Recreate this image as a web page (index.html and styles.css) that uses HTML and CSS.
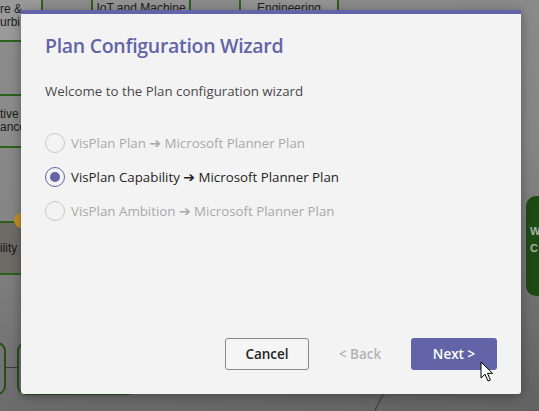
FILE: index.html
```html
<!DOCTYPE html>
<html lang="en">
<head>
<meta charset="utf-8">
<title>Plan Configuration Wizard</title>
<link rel="stylesheet" href="styles.css">
</head>
<body>
<div class="canvas">
  <div class="node node-top n1"><span>re &amp;<br>urbi</span></div>
  <div class="node node-top n2"><span>IoT and Machine</span></div>
  <div class="node node-top n3"><span>Engineering</span></div>
  <div class="node node-left n4"><span>tive<br>ance</span></div>
  <div class="node node-left n5"><span>ility</span></div>
  <div class="badge"></div>
  <div class="pill p1"></div>
  <div class="pill p2"></div>
  <div class="link l1"></div>
  <div class="link l2"></div>
  <div class="green-node"><span>W<br>C</span></div>
</div>

<div class="overlay">
  <div class="dialog" role="dialog" aria-labelledby="dlg-title">
    <h1 class="title" id="dlg-title">Plan Configuration Wizard</h1>
    <p class="intro">Welcome to the Plan configuration wizard</p>
    <div class="options">
      <div class="option is-disabled">
        <span class="radio"></span>
        <span class="label">VisPlan Plan <span class="arrow">➔</span> Microsoft Planner Plan</span>
      </div>
      <div class="option is-checked">
        <span class="radio"></span>
        <span class="label">VisPlan Capability <span class="arrow">➔</span> Microsoft Planner Plan</span>
      </div>
      <div class="option is-disabled">
        <span class="radio"></span>
        <span class="label">VisPlan Ambition <span class="arrow">➔</span> Microsoft Planner Plan</span>
      </div>
    </div>
    <div class="footer">
      <button class="btn btn-default">Cancel</button>
      <button class="btn btn-ghost" disabled>&lt; Back</button>
      <button class="btn btn-primary">Next &gt;</button>
    </div>
  </div>
</div>

<svg class="cursor" width="14" height="22" viewBox="0 0 14 22" aria-hidden="true">
  <path d="M1 1 L1 17 L5 13.2 L8 20 L10.4 19 L7.5 12.3 L12.5 12.3 Z" fill="#fff" stroke="#000" stroke-width="1" stroke-linejoin="miter"/>
</svg>
</body>
</html>
```
FILE: styles.css
```css
html, body {
  margin: 0;
  padding: 0;
}

body {
  width: 539px;
  height: 411px;
  overflow: hidden;
  position: relative;
  font-family: "Open Sans", "Noto Sans", "DejaVu Sans", sans-serif;
  background: linear-gradient(172deg, #8d8d8d 0%, #858585 45%, #6b6b6b 85%, #626262 100%);
}

/* ---------- background diagram (free canvas) ---------- */
.canvas {
  position: absolute;
  inset: 0;
}

.node {
  position: absolute;
  box-sizing: border-box;
  background: #939393;
  color: #1c1c1c;
  font-family: "Liberation Sans", Arial, sans-serif;
  font-size: 12px;
  line-height: 13px;
  display: flex;
  justify-content: center;
}

.node-top {
  top: -20px;
  height: 62px;
  border: 2px solid #2b6219;
  align-items: flex-start;
  padding-top: 20px;
}

.n1 {
  left: -60px;
  width: 103px;
  justify-content: flex-start;
  padding-left: 58px;
  padding-top: 21px;
  background: #9a9a9a;
}
.n2 { left: 91px; width: 100px; }
.n3 { left: 239px; width: 100px; }

.node-left {
  left: -60px;
  width: 125px;
  height: 54px;
  border: 2px solid #2b6219;
  align-items: center;
  justify-content: flex-start;
  padding-left: 58px;
}

.n4 { top: 94px; background: #8c8c8c; }
.n5 { top: 221px; background: #6e6b67; color: #161616; }

.badge {
  position: absolute;
  left: 14px;
  top: 213px;
  width: 15px;
  height: 15px;
  border-radius: 50%;
  background: #c0912a;
}

.pill {
  position: absolute;
  top: 342px;
  height: 53px;
  box-sizing: border-box;
  border: 2px solid #26501a;
  border-radius: 9px;
  background: #747474;
}

.p1 { left: -40px; width: 46px; }
.p2 { left: 17px; width: 120px; }

.link {
  position: absolute;
  background: #3a3a3a;
}

.l1 { left: 5px; top: 367px; width: 13px; height: 1px; }
.l2 { left: 383px; top: 394px; width: 1px; height: 19px; transform: rotate(28deg); transform-origin: top; }

.green-node {
  position: absolute;
  left: 526px;
  top: 196px;
  width: 40px;
  height: 100px;
  border-radius: 10px;
  background: #1f4a13;
  color: #a9b3a4;
  font-family: "Liberation Sans", Arial, sans-serif;
  font-weight: 700;
  font-size: 11px;
  line-height: 17px;
  box-sizing: border-box;
  padding: 27px 0 0 4px;
}

/* ---------- modal ---------- */
.overlay {
  position: absolute;
  inset: 0;
  box-sizing: border-box;
  padding: 10px 18px 17px 21px;
  display: flex;
  align-items: flex-start;
}

.dialog {
  width: 500px;
  height: 384px;
  box-sizing: border-box;
  background: #f3f3f3;
  border-top: 4px solid #6264a7;
  border-radius: 0 0 3px 3px;
  box-shadow: 0 2px 12px rgba(0, 0, 0, 0.35);
  padding: 18px 24px 24px;
  display: flex;
  flex-direction: column;
}

.title {
  margin: 0;
  font-size: 19.5px;
  line-height: 28px;
  font-weight: 600;
  color: #6264a7;
  letter-spacing: -0.3px;
}

.intro {
  margin: 21px 0 0;
  font-size: 13.3px;
  line-height: 20px;
  color: #4a4a4a;
}

.options {
  margin-top: 32px;
  display: flex;
  flex-direction: column;
  gap: 14px;
}

.option {
  display: flex;
  align-items: center;
  gap: 6px;
  height: 20px;
  font-size: 13.3px;
}

.arrow {
  font-family: "DejaVu Sans", sans-serif;
  font-size: 14px;
  font-weight: 700;
}

.radio {
  width: 20px;
  height: 20px;
  box-sizing: border-box;
  border-radius: 50%;
  border: 1px solid #c8c8c8;
  display: flex;
  align-items: center;
  justify-content: center;
  flex: none;
}

.is-disabled .label {
  color: #a9a9a9;
}

.is-checked .label {
  color: #242424;
}

.is-checked .radio {
  border: 1.5px solid #6264a7;
}

.is-checked .radio::after {
  content: "";
  width: 10px;
  height: 10px;
  border-radius: 50%;
  background: #6264a7;
}

.footer {
  margin-top: auto;
  display: flex;
  justify-content: flex-end;
  gap: 8px;
}

.btn {
  height: 32px;
  min-width: 84px;
  padding: 0 12px;
  border-radius: 3px;
  font-family: inherit;
  font-size: 13.5px;
  font-weight: 600;
  border: 1px solid transparent;
  background: transparent;
}

.btn-default {
  width: 83px;
  border-color: #8a8886;
  color: #242424;
  background: #f5f5f5;
}

.btn-ghost {
  width: 86px;
  color: #b3b3b3;
}

.btn-primary {
  width: 86px;
  background: #6264a7;
  color: #ffffff;
}

/* pointer on top of everything */
.cursor {
  position: absolute;
  left: 480px;
  top: 361px;
}
```
